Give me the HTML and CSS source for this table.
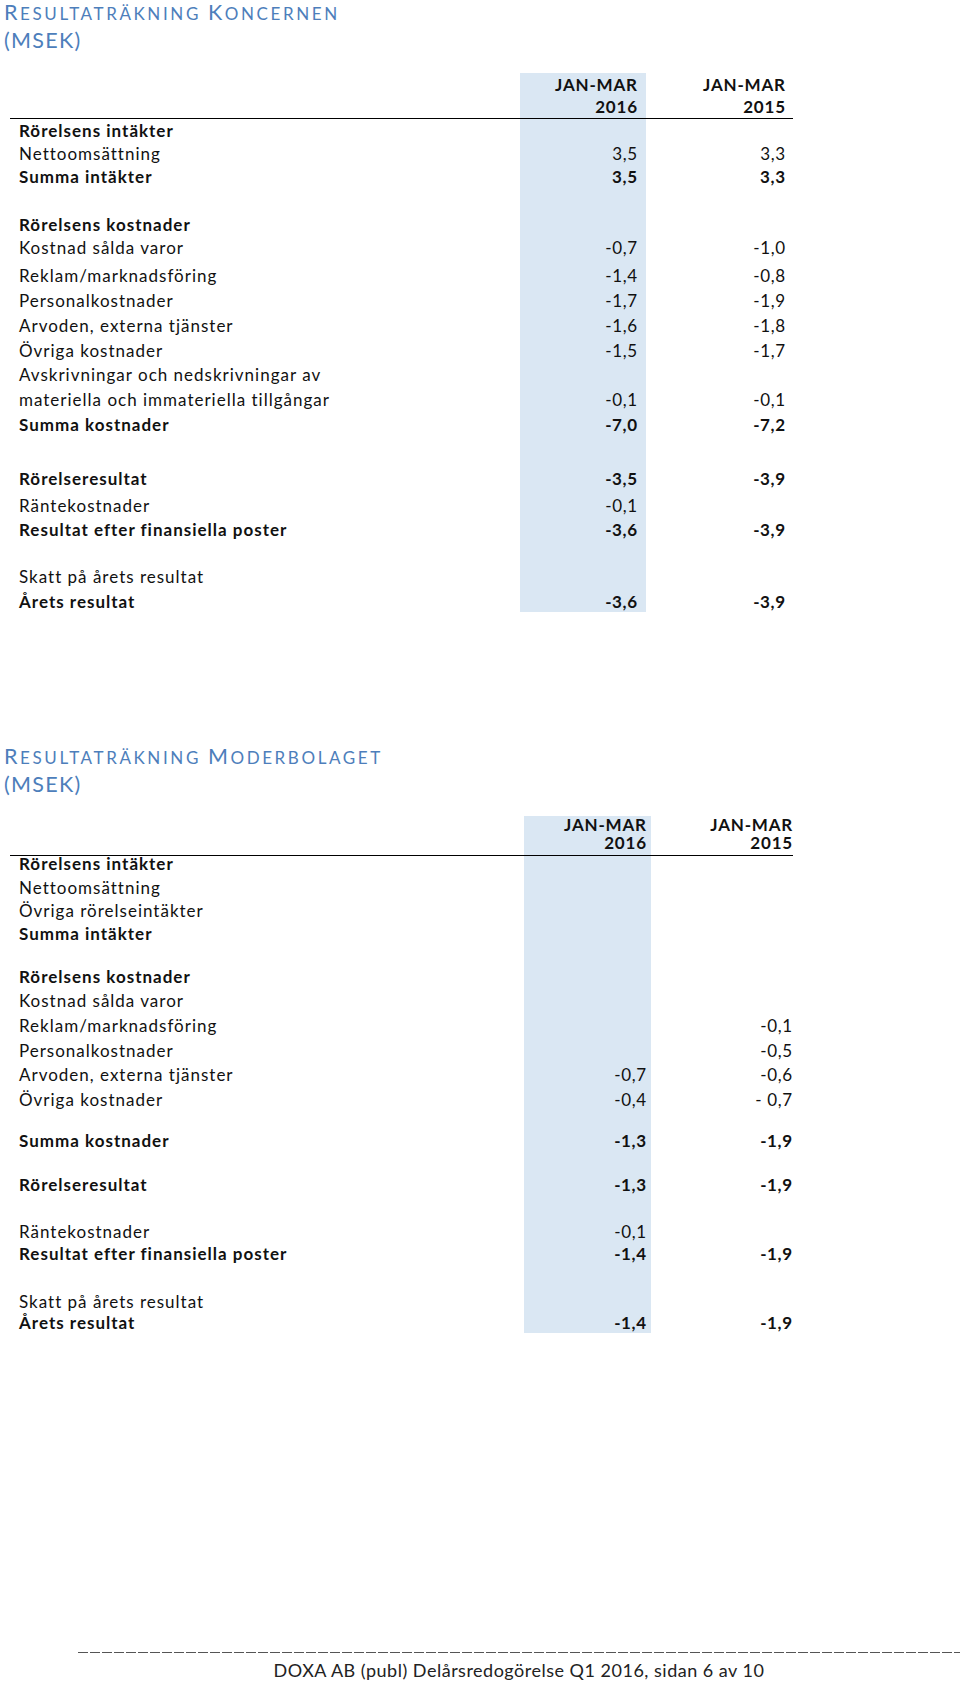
FILE: index.html
```html
<!DOCTYPE html>
<html lang="sv">
<head>
<meta charset="utf-8">
<title>Resultaträkning</title>
<link rel="stylesheet" href="styles.css">
</head>
<body>
<div class="page">
  <section class="stmt s1">
    <h2 class="title"><span class="tl"><span class="cap">R</span>esultaträkning <span class="cap">K</span>oncernen</span><span class="tl unit">(MSEK)</span></h2>
    <div class="tbl">
      <div class="row head"><div class="lbl"></div><div class="c1">JAN-MAR<br>2016</div><div class="c2">JAN-MAR<br>2015</div></div>
      <div class="row b first"><div class="lbl">Rörelsens intäkter</div><div class="c1"></div><div class="c2"></div></div>
      <div class="row h23"><div class="lbl">Nettoomsättning</div><div class="c1">3,5</div><div class="c2">3,3</div></div>
      <div class="row b h48"><div class="lbl">Summa intäkter</div><div class="c1">3,5</div><div class="c2">3,3</div></div>
      <div class="row b h23"><div class="lbl">Rörelsens kostnader</div><div class="c1"></div><div class="c2"></div></div>
      <div class="row h28"><div class="lbl">Kostnad sålda varor</div><div class="c1">-0,7</div><div class="c2">-1,0</div></div>
      <div class="row h25"><div class="lbl">Reklam/marknadsföring</div><div class="c1">-1,4</div><div class="c2">-0,8</div></div>
      <div class="row h25"><div class="lbl">Personalkostnader</div><div class="c1">-1,7</div><div class="c2">-1,9</div></div>
      <div class="row h25"><div class="lbl">Arvoden, externa tjänster</div><div class="c1">-1,6</div><div class="c2">-1,8</div></div>
      <div class="row h24"><div class="lbl">Övriga kostnader</div><div class="c1">-1,5</div><div class="c2">-1,7</div></div>
      <div class="row h25"><div class="lbl">Avskrivningar och nedskrivningar av</div><div class="c1"></div><div class="c2"></div></div>
      <div class="row h25"><div class="lbl">materiella och immateriella tillgångar</div><div class="c1">-0,1</div><div class="c2">-0,1</div></div>
      <div class="row b h54"><div class="lbl">Summa kostnader</div><div class="c1">-7,0</div><div class="c2">-7,2</div></div>
      <div class="row b h27"><div class="lbl">Rörelseresultat</div><div class="c1">-3,5</div><div class="c2">-3,9</div></div>
      <div class="row h24"><div class="lbl">Räntekostnader</div><div class="c1">-0,1</div><div class="c2"></div></div>
      <div class="row b h47"><div class="lbl">Resultat efter finansiella poster</div><div class="c1">-3,6</div><div class="c2">-3,9</div></div>
      <div class="row h25"><div class="lbl">Skatt på årets resultat</div><div class="c1"></div><div class="c2"></div></div>
      <div class="row b h18"><div class="lbl">Årets resultat</div><div class="c1">-3,6</div><div class="c2">-3,9</div></div>
    </div>
  </section>

  <section class="stmt s2">
    <h2 class="title"><span class="tl"><span class="cap">R</span>esultaträkning <span class="cap">M</span>oderbolaget</span><span class="tl unit">(MSEK)</span></h2>
    <div class="tbl">
      <div class="row head"><div class="lbl"></div><div class="c1">JAN-MAR<br>2016</div><div class="c2">JAN-MAR<br>2015</div></div>
      <div class="row b h24"><div class="lbl">Rörelsens intäkter</div><div class="c1"></div><div class="c2"></div></div>
      <div class="row h23"><div class="lbl">Nettoomsättning</div><div class="c1"></div><div class="c2"></div></div>
      <div class="row h23"><div class="lbl">Övriga rörelseintäkter</div><div class="c1"></div><div class="c2"></div></div>
      <div class="row b h43"><div class="lbl">Summa intäkter</div><div class="c1"></div><div class="c2"></div></div>
      <div class="row b h24"><div class="lbl">Rörelsens kostnader</div><div class="c1"></div><div class="c2"></div></div>
      <div class="row h25"><div class="lbl">Kostnad sålda varor</div><div class="c1"></div><div class="c2"></div></div>
      <div class="row h25"><div class="lbl">Reklam/marknadsföring</div><div class="c1"></div><div class="c2">-0,1</div></div>
      <div class="row h24"><div class="lbl">Personalkostnader</div><div class="c1"></div><div class="c2">-0,5</div></div>
      <div class="row h25"><div class="lbl">Arvoden, externa tjänster</div><div class="c1">-0,7</div><div class="c2">-0,6</div></div>
      <div class="row h41"><div class="lbl">Övriga kostnader</div><div class="c1">-0,4</div><div class="c2">- 0,7</div></div>
      <div class="row b h44"><div class="lbl">Summa kostnader</div><div class="c1">-1,3</div><div class="c2">-1,9</div></div>
      <div class="row b h47"><div class="lbl">Rörelseresultat</div><div class="c1">-1,3</div><div class="c2">-1,9</div></div>
      <div class="row h22"><div class="lbl">Räntekostnader</div><div class="c1">-0,1</div><div class="c2"></div></div>
      <div class="row b h48"><div class="lbl">Resultat efter finansiella poster</div><div class="c1">-1,4</div><div class="c2">-1,9</div></div>
      <div class="row h21"><div class="lbl">Skatt på årets resultat</div><div class="c1"></div><div class="c2"></div></div>
      <div class="row b h18"><div class="lbl">Årets resultat</div><div class="c1">-1,4</div><div class="c2">-1,9</div></div>
    </div>
  </section>

  <footer class="foot">
    <div class="dash"></div>
    <p class="foot-text">DOXA AB (publ) Delårsredogörelse Q1 2016, sidan 6 av 10</p>
  </footer>
</div>
</body>
</html>
```

FILE: styles.css
```css
* { box-sizing: border-box; }
html, body { margin: 0; padding: 0; background: #fff; }
body {
  font-family: Lato, "Noto Sans", "DejaVu Sans", sans-serif;
  font-size: 17px;
  color: #111;
}
.page { width: 960px; }

.title {
  margin: 0;
  padding-left: 4px;
  color: #4d7ebb;
  font-weight: 400;
  font-size: 17px;
  letter-spacing: 2.6px;
  text-transform: uppercase;
  white-space: nowrap;
}
.title .tl { display: block; height: 28px; line-height: 28px; }
.title .cap { font-size: 21.5px; }
.title .unit { font-size: 21.5px; letter-spacing: 1.3px; }

.s1 .title { margin-top: -2px; margin-bottom: 19px; }
.s2 { margin-top: 130px; }
.s2 .title { margin-bottom: 18px; }

.tbl { margin-left: 10px; width: 783px; }
.row { display: grid; line-height: 16px; }
.s1 .row { grid-template-columns: 510px 126px 147px; }
.s2 .row { grid-template-columns: 514px 127px 142px; }

.lbl { padding-left: 9px; white-space: nowrap; letter-spacing: 1px; }
.c1, .c2 { text-align: right; letter-spacing: 0.6px; }
.c1 { background: #dae7f3; }
.s1 .c1 { padding-right: 8.4px; }
.s1 .c2 { padding-right: 7.4px; }
.s2 .c1 { padding-right: 4.4px; }
.s2 .c2 { padding-right: 0.4px; }

.b { font-weight: 700; }

.head { font-weight: 700; border-bottom: 1px solid #000; }
.head .c1, .head .c2 { letter-spacing: 0.8px; }
.s1 .head { height: 46px; line-height: 22px; }
.s1 .head > div { padding-top: 1px; }
.s1 .head .c1 { padding-right: 8.2px; }
.s1 .head .c2 { padding-right: 7.2px; }
.s2 .head { height: 40px; line-height: 18px; }
.s2 .head > div { padding-top: 0; }
.s2 .head .c1 { padding-right: 4.2px; }
.s2 .head .c2 { padding-right: 0; }

.first { height: 27px; }
.first > div { padding-top: 4px; }

.h18 { height: 18px; }
.h21 { height: 21px; }
.h22 { height: 22px; }
.h23 { height: 23px; }
.h24 { height: 24px; }
.h25 { height: 25px; }
.h27 { height: 27px; }
.h28 { height: 28px; }
.h41 { height: 41px; }
.h43 { height: 43px; }
.h44 { height: 44px; }
.h47 { height: 47px; }
.h48 { height: 48px; }
.h54 { height: 54px; }

.foot { margin-top: 319px; margin-left: 78px; }
.dash {
  height: 1px;
  background: repeating-linear-gradient(90deg, #555 0 10px, transparent 10px 12px);
}
.foot-text {
  margin: 7px 0 0;
  text-align: center;
  font-size: 18px;
  line-height: 20px;
  letter-spacing: 0.5px;
  color: #222;
}
```
